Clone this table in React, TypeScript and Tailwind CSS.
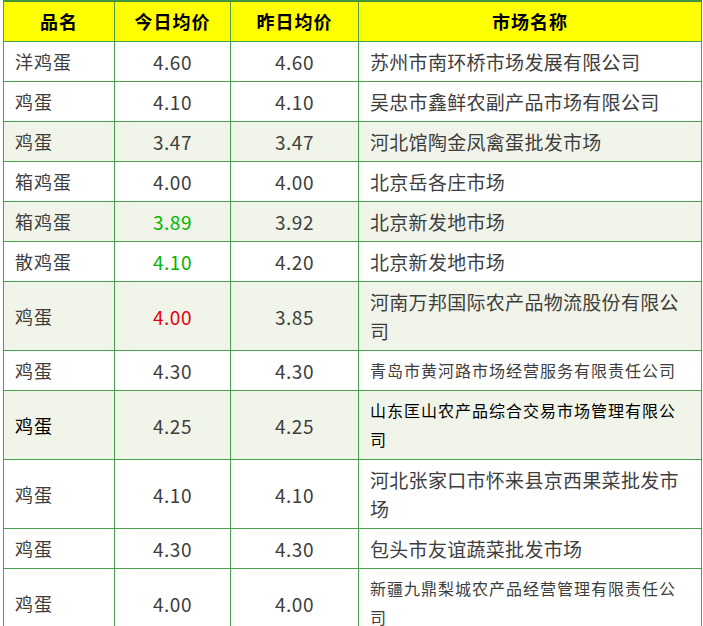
import React from "react";

type Row = {
  name: string;
  today: string;
  yest: string;
  market: string;
  todayColor?: string;
  stripe?: boolean;
  marketSize?: "lg" | "md";
  dark?: boolean;
};

const rows: Row[] = [
  { name: "洋鸡蛋", today: "4.60", yest: "4.60", market: "苏州市南环桥市场发展有限公司" },
  { name: "鸡蛋", today: "4.10", yest: "4.10", market: "吴忠市鑫鲜农副产品市场有限公司" },
  { name: "鸡蛋", today: "3.47", yest: "3.47", market: "河北馆陶金凤禽蛋批发市场", stripe: true },
  { name: "箱鸡蛋", today: "4.00", yest: "4.00", market: "北京岳各庄市场" },
  { name: "箱鸡蛋", today: "3.89", yest: "3.92", market: "北京新发地市场", stripe: true, todayColor: "green" },
  { name: "散鸡蛋", today: "4.10", yest: "4.20", market: "北京新发地市场", todayColor: "green" },
  { name: "鸡蛋", today: "4.00", yest: "3.85", market: "河南万邦国际农产品物流股份有限公司", stripe: true, todayColor: "red" },
  { name: "鸡蛋", today: "4.30", yest: "4.30", market: "青岛市黄河路市场经营服务有限责任公司", marketSize: "md" },
  { name: "鸡蛋", today: "4.25", yest: "4.25", market: "山东匡山农产品综合交易市场管理有限公司", stripe: true, marketSize: "md", dark: true },
  { name: "鸡蛋", today: "4.10", yest: "4.10", market: "河北张家口市怀来县京西果菜批发市场" },
  { name: "鸡蛋", today: "4.30", yest: "4.30", market: "包头市友谊蔬菜批发市场" },
  { name: "鸡蛋", today: "4.00", yest: "4.00", market: "新疆九鼎梨城农产品经营管理有限责任公司", marketSize: "md" },
];

const cell = "border border-[#4aa04a] py-[5px] leading-[29px] align-middle";

export default function App() {
  return (
    <div
      className="w-[703px] h-[626px] overflow-hidden bg-white"
      style={{ fontFamily: '"Noto Sans CJK SC", "Noto Sans", sans-serif' }}
    >
      <table className="ml-[3px] w-[698px] table-fixed border-collapse text-[#3e3e3e]">
        <colgroup>
          <col className="w-[111px]" />
          <col className="w-[116px]" />
          <col className="w-[128px]" />
          <col className="w-[343px]" />
        </colgroup>
        <thead>
          <tr className="bg-[#ffff00] text-black font-bold text-[18px] tracking-[1px]">
            <th className={`${cell} border-t-2 border-t-[#3f963f] text-center`}>品名</th>
            <th className={`${cell} border-t-2 border-t-[#3f963f] text-center`}>今日均价</th>
            <th className={`${cell} border-t-2 border-t-[#3f963f] text-center`}>昨日均价</th>
            <th className={`${cell} border-t-2 border-t-[#3f963f] text-center`}>市场名称</th>
          </tr>
        </thead>
        <tbody>
          {rows.map((r, i) => {
            const todayCls =
              r.todayColor === "green"
                ? "text-[#00b500]"
                : r.todayColor === "red"
                ? "text-[#e60012]"
                : "";
            const mCls =
              r.marketSize === "md"
                ? "text-[16px] tracking-[1px]"
                : "text-[19px] tracking-[0.3px]";
            return (
              <tr key={i} className={r.stripe ? "bg-[#f1f4e8]" : "bg-white"}>
                <td className={`${cell} pl-[11px] text-left text-[18px] tracking-[1px] ${r.dark ? "text-black" : ""}`}>
                  {r.name}
                </td>
                <td className={`${cell} text-center text-[19px] tracking-[0.5px] ${todayCls}`}>{r.today}</td>
                <td className={`${cell} text-center text-[19px] tracking-[0.5px]`}>{r.yest}</td>
                <td className={`${cell} pl-[11px] pr-[12px] text-left ${mCls} ${r.dark ? "text-black" : ""}`}>
                  {r.market}
                </td>
              </tr>
            );
          })}
        </tbody>
      </table>
    </div>
  );
}
